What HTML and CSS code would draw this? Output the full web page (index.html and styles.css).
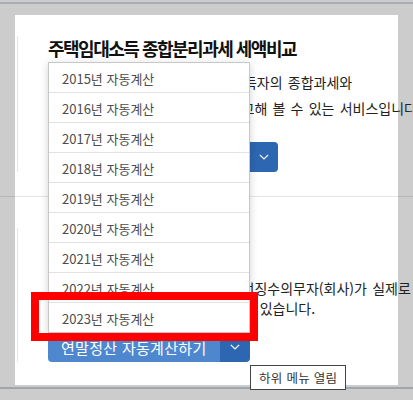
FILE: index.html
```html
<!DOCTYPE html>
<html lang="ko">
<head>
<meta charset="utf-8">
<title>세액비교</title>
<link rel="stylesheet" href="styles.css">
</head>
<body>
<div class="topbar"></div>
<main class="panel">
  <section class="calc calc--first">
    <div class="calc-inner">
      <h2 class="calc-title">주택임대소득 종합분리과세 세액비교</h2>
      <p class="calc-desc calc-desc--wide">주택 임대소득이 있는 주택임대소득자의 종합과세와<br>분리과세 시 예상 세액을 서로 비교해 볼 수 있는 서비스입니다.</p>
      <div class="split-btn">
        <button class="split-main split-main--wide">주택임대소득 세액비교 계산하기</button>
        <button class="split-toggle"><svg width="10" height="6" viewBox="0 0 10 6"><path d="M0.8 0.8 L5 5 L9.2 0.8" fill="none" stroke="#fff" stroke-width="1.2"/></svg></button>
      </div>
    </div>
  </section>
  <hr class="divider">
  <section class="calc calc--second">
    <div class="calc-inner">
      <h2 class="calc-title">연말정산 자동계산</h2>
      <p class="calc-desc">근로자 본인 및 해당 연말정산 원천징수의무자(회사)가 실제로<br>연말정산 결과를 미리 확인해 볼 수 있습니다.</p>
      <div class="split-btn">
        <ul class="dropdown">
          <li class="dropdown-item">2015년 자동계산</li>
          <li class="dropdown-item">2016년 자동계산</li>
          <li class="dropdown-item">2017년 자동계산</li>
          <li class="dropdown-item">2018년 자동계산</li>
          <li class="dropdown-item">2019년 자동계산</li>
          <li class="dropdown-item">2020년 자동계산</li>
          <li class="dropdown-item">2021년 자동계산</li>
          <li class="dropdown-item">2022년 자동계산</li>
          <li class="dropdown-item">2023년 자동계산</li>
        </ul>
        <button class="split-main split-main--light">연말정산 자동계산하기</button>
        <button class="split-toggle split-toggle--wide"><svg width="10" height="6" viewBox="0 0 10 6"><path d="M0.8 0.8 L5 5 L9.2 0.8" fill="none" stroke="#fff" stroke-width="1.2"/></svg></button>
        <span class="tooltip">하위 메뉴 열림</span>
      </div>
    </div>
  </section>
</main>
<div class="bottombar"></div>
<div class="highlight"></div>
</body>
</html>
```

FILE: styles.css
```css
html, body {
  margin: 0;
  padding: 0;
}
body {
  width: 413px;
  height: 400px;
  overflow: hidden;
  background: #cccccc;
  font-family: "Noto Sans CJK KR", "Noto Sans", sans-serif;
  position: relative;
}
.topbar {
  margin-top: 2px;
  height: 2px;
  background: #a9aeb4;
}
.panel {
  display: block;
  margin: 11px 0 0 15px;
  width: 383px;
  height: 370px;
  background: #ffffff;
  box-sizing: border-box;
}
.calc--first {
  padding: 20px 0 24px 2px;
}
.calc--second {
  padding: 30px 0 0 2px;
}
.calc-inner {
  border-left: 1px solid #e6e6e6;
  padding-left: 30px;
}
.calc-title {
  margin: 1px 0 0;
  font-size: 18px;
  line-height: 24px;
  font-weight: 700;
  letter-spacing: -1.5px;
  color: #111111;
  white-space: nowrap;
}
.calc-desc {
  margin: 26px 0 0;
  font-size: 14px;
  line-height: 20px;
  word-spacing: 1.3px;
  color: #222222;
  white-space: nowrap;
}
.calc-desc--wide {
  margin-top: 9px;
  line-height: 26px;
}
.calc--first .split-btn {
  margin-top: 21px;
}
.calc--second .split-btn {
  margin-top: 14px;
}
.split-btn {
  position: relative;
  display: flex;
  height: 30px;
}
.split-main {
  border: 0;
  margin: 0;
  padding: 0 0 0 13px;
  height: 30px;
  width: 172px;
  text-align: left;
  font-family: inherit;
  font-size: 15px;
  letter-spacing: 0.3px;
  color: #ffffff;
  background: #2d67b2;
  border-radius: 4px 0 0 4px;
  white-space: nowrap;
}
.split-main--wide {
  width: 202px;
}
.split-main--light {
  background: #4f87cf;
}
.split-toggle {
  border: 0;
  margin: 0;
  padding: 0;
  width: 28px;
  height: 30px;
  background: #2d67b2;
  border-radius: 0 4px 4px 0;
  display: flex;
  align-items: center;
  justify-content: center;
}
.split-toggle--wide {
  width: 30px;
}
.dropdown {
  position: absolute;
  left: 0;
  bottom: calc(100% - 1px);
  width: 202px;
  margin: 0;
  padding: 0;
  list-style: none;
  background: #ffffff;
  border: 1px solid #c8c8c8;
  box-sizing: border-box;
  box-shadow: 0 2px 8px rgba(0, 0, 0, 0.18);
  z-index: 5;
}
.dropdown-item {
  height: 29px;
  line-height: 31px;
  padding-left: 13px;
  font-size: 13px;
  color: #4d4d4d;
  border-bottom: 1px solid #e2e2e2;
  white-space: nowrap;
}
.dropdown-item:last-child {
  border-bottom: 0;
}
.tooltip {
  position: absolute;
  left: 202px;
  top: 33px;
  padding: 0 8px;
  height: 23px;
  line-height: 23px;
  font-size: 12.5px;
  letter-spacing: 0.3px;
  color: #333333;
  background: #ffffff;
  border: 1px solid #444444;
  white-space: nowrap;
  z-index: 6;
}
.divider {
  margin: 0 0 0 -15px;
  width: 413px;
  height: 1px;
  border: 0;
  background: rgba(0, 0, 0, 0.1);
}
.bottombar {
  margin-top: 2px;
  height: 2px;
  background: #9ea6ae;
}
.highlight {
  position: absolute;
  left: 31px;
  top: 292px;
  width: 227px;
  height: 49px;
  box-sizing: border-box;
  border: 8px solid #ff0000;
  z-index: 10;
}
```
